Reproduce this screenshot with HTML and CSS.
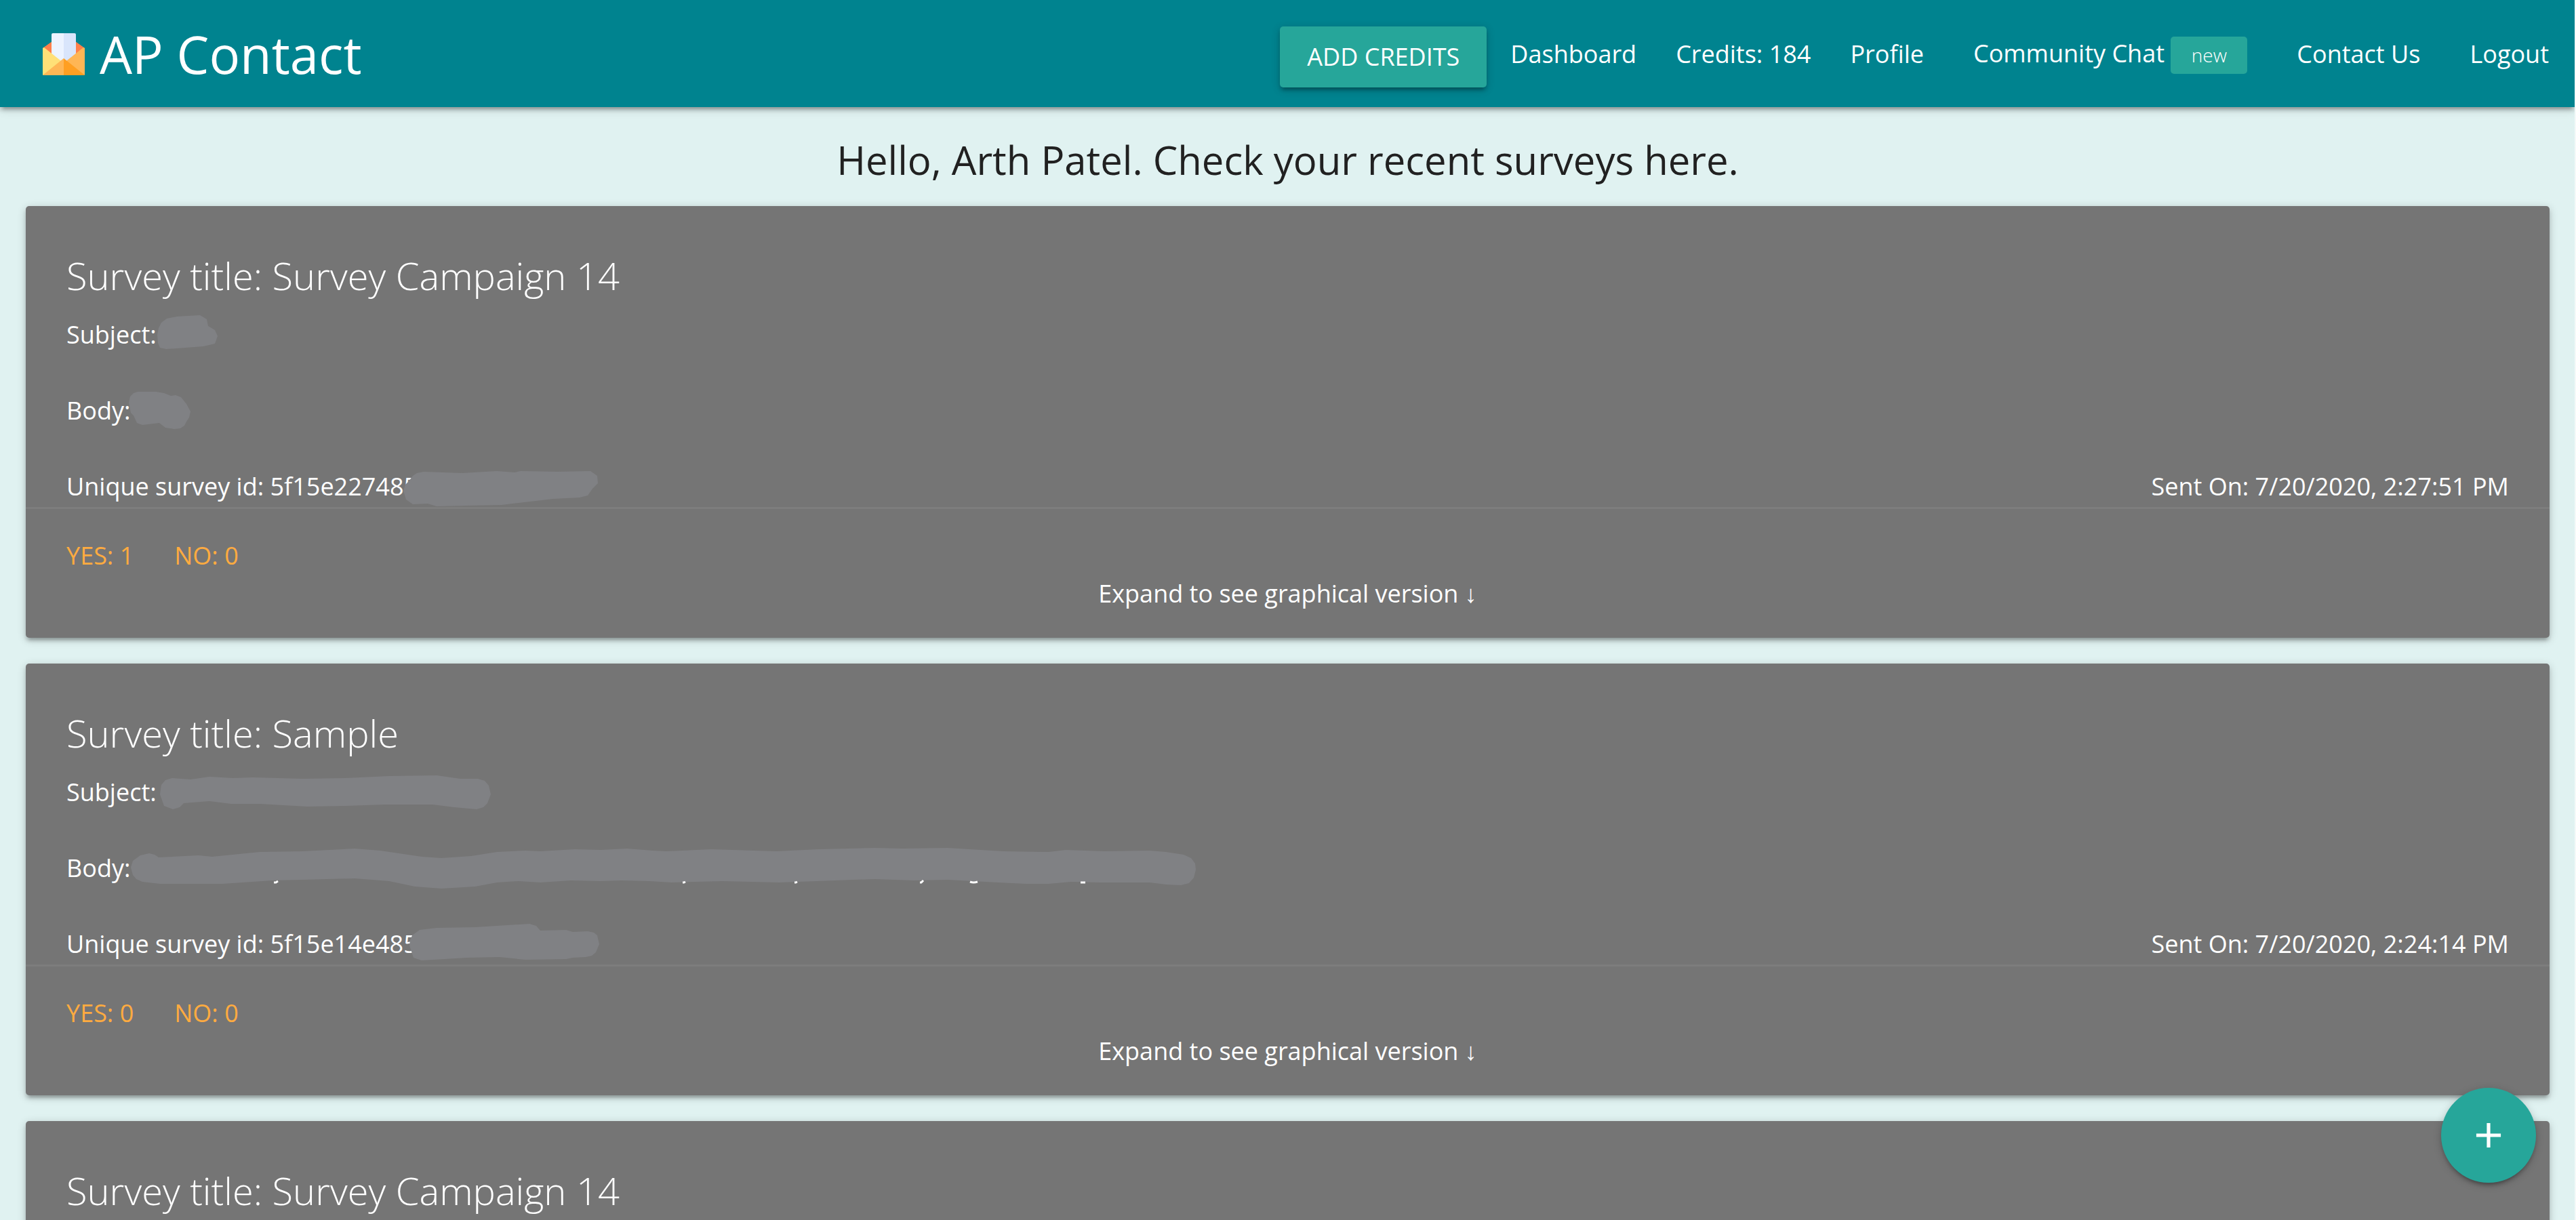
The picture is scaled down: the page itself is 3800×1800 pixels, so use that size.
FILE: index.html
```
<!DOCTYPE html>
<html lang="en">
<head>
<meta charset="utf-8">
<meta name="viewport" content="width=device-width, initial-scale=1">
<title>AP Contact</title>
<link rel="stylesheet" href="styles.css">
</head>
<body>
<header class="navbar">
  <a class="brand" href="#">
    <svg class="brand-icon" viewBox="0 0 62 62" aria-hidden="true">
      <path fill="#ff7f4a" d="M0 22 14 12H48L62 22 31 45Z"/>
      <path fill="#ecf3ff" d="M15 0H31V46L13 34V2Q13 0 15 0Z"/>
      <path fill="#d9e5fb" d="M31 0H47Q49 0 49 2V34L31 46Z"/>
      <path fill="#ffe077" d="M0 22 2 21 31 44 0 62Z"/>
      <path fill="#ffb655" d="M62 22 60 21 31 44 62 62Z"/>
      <path fill="#ecf3ff" d="M19 34H31V41L27 39Z"/>
      <path fill="#d9e5fb" d="M31 34H43L35 39 31 41Z"/>
      <path fill="#ffb655" d="M0 62 31 37V62Z"/>
      <path fill="#ff9f22" d="M31 37 62 62H31Z"/>
    </svg>
    <span>AP Contact</span>
  </a>
  <nav class="menu">
    <button class="btn" type="button">Add Credits</button>
    <a href="#">Dashboard</a>
    <a href="#">Credits: 184</a>
    <a href="#">Profile</a>
    <a class="wide" href="#">Community Chat <span class="badge">new</span></a>
    <a class="wide" href="#">Contact Us</a>
    <a class="wide" href="#">Logout</a>
  </nav>
</header>

<main class="page">
  <h1 class="greeting">Hello, Arth Patel. Check your recent surveys here.</h1>

  <article class="card">
    <div class="card-content">
      <h2>Survey title: Survey Campaign 14</h2>
      <p>Subject:</p>
      <p>Body:</p>
      <p class="meta"><span>Unique survey id: 5f15e227485</span><time>Sent On: 7/20/2020, 2:27:51 PM</time></p>
    </div>
    <div class="card-action">
      <div class="votes"><a href="#">Yes: 1</a><a href="#">No: 0</a></div>
      <button class="expand" type="button">Expand to see graphical version ↓</button>
    </div>
    <svg class="redaction" viewBox="0 0 1760 460" aria-hidden="true">
      <path d="M194 190 196 180 200 172 208 166 223 163 257 161 267 167 269 177 279 183 283 192 279 203 262 207 236 209 207 211 198 209 195 202Z"/>
      <path d="M152 290 154 281 159 276 165 274 192 274 204 276 214 280 221 279 229 282 237 292 243 303 241 312 237 318 234 324 228 328 219 329 206 327 197 320 172 323 164 320 159 309 155 305Z"/>
      <path d="M557 420 560 411 564 407 571 398 577 394 587 392 644 394 695 391 721 393 730 391 785 392 833 391 843 398 844 409 836 417 829 427 817 430 778 432 727 438 702 441 651 442 606 443 593 439 571 440 561 433Z"/>
    </svg>
  </article>

  <article class="card">
    <div class="card-content">
      <h2>Survey title: Sample</h2>
      <p>Subject:</p>
      <p>Body:</p>
      <p class="meta"><span>Unique survey id: 5f15e14e485</span><time>Sent On: 7/20/2020, 2:24:14 PM</time></p>
    </div>
    <div class="card-action">
      <div class="votes"><a href="#">Yes: 0</a><a href="#">No: 0</a></div>
      <button class="expand" type="button">Expand to see graphical version ↓</button>
    </div>
    <svg class="redaction" viewBox="0 0 1760 460" aria-hidden="true">
      <path d="M198 193 200 179 206 172 216 169 243 171 271 167 306 169 335 168 408 170 472 169 536 166 606 165 641 170 667 170 677 173 683 180 686 193 681 206 675 212 665 215 632 212 600 208 530 208 472 210 415 211 345 207 303 207 271 203 233 206 227 212 217 215 204 210Z"/>
      <path d="M155 301 158 291 169 283 182 280 190 282 196 286 255 283 275 285 345 278 408 277 485 273 523 276 584 285 613 287 657 284 695 278 737 276 759 277 810 274 848 275 887 273 925 276 945 277 1011 274 1107 277 1169 274 1252 272 1293 273 1360 272 1442 277 1509 278 1534 275 1592 277 1658 276 1682 278 1708 282 1719 287 1725 295 1726 304 1723 316 1716 324 1704 327 1682 326 1658 323 1583 323 1542 322 1509 325 1476 325 1434 323 1360 319 1310 320 1252 318 1194 320 1111 323 1028 321 953 323 920 321 879 320 848 321 804 320 759 323 727 321 695 323 663 329 613 332 574 329 536 321 485 317 408 319 364 320 290 325 198 325 172 322 163 318 158 312Z"/>
      <path d="M566 416 567 408 570 401 581 393 606 390 663 389 743 384 753 387 759 394 797 393 807 396 829 395 838 397 843 401 846 414 841 426 835 431 826 433 807 434 797 436 737 437 699 433 651 434 584 438 572 434Z"/>
      <path class="remnant" d="M366 323H369L372 321M969 323H971L973 322M1134 323H1136L1138 322M1319 323H1321L1324 320M1393 322Q1398 324 1404 322M1556 323H1563"/>
    </svg>
  </article>

  <article class="card">
    <div class="card-content">
      <h2>Survey title: Survey Campaign 14</h2>
      <p>Subject:</p>
      <p>Body:</p>
      <p class="meta"><span>Unique survey id:</span></p>
    </div>
  </article>
</main>

<button class="fab" type="button" aria-label="New survey">
  <svg viewBox="0 0 24 24" aria-hidden="true"><path fill="#fff" d="M19 13h-6v6h-2v-6H5v-2h6V5h2v6h6v2z"/></svg>
</button>
</body>
</html>
```
FILE: styles.css
```
* { box-sizing: border-box; }

body {
  margin: 0;
  height: 100vh;
  overflow: hidden;
  display: flex;
  flex-direction: column;
  border-right: 2px solid #f4faf9;
  background: #e0f2f1;
  color: #212121;
  font-family: "Open Sans", "Noto Sans", "Liberation Sans", sans-serif;
  font-size: 36px;
  line-height: 56px;
}

a { color: inherit; text-decoration: none; }

button {
  border: 0;
  color: #fff;
  font: inherit;
  cursor: pointer;
}

.navbar,
.card,
.btn,
.fab {
  box-shadow: 0 5px 5px rgba(0, 0, 0, .14), 0 8px 3px -5px rgba(0, 0, 0, .12), 0 3px 13px rgba(0, 0, 0, .2);
}

.navbar {
  position: relative;
  z-index: 1;
  flex: none;
  display: flex;
  align-items: center;
  justify-content: space-between;
  height: 158px;
  padding: 2px 38px 0 63px;
  background: #00838f;
  color: #fff;
}

.brand {
  display: flex;
  align-items: center;
  gap: 22px;
  font-size: 76px;
  line-height: 104px;
}

.brand-icon { width: 62px; height: 62px; }

.menu {
  display: flex;
  align-items: center;
  gap: 58px;
}

.menu .btn {
  width: 305px;
  height: 90px;
  margin: 8px -23px 0 0;
  border-radius: 5px;
  background: #26a69a;
  text-transform: uppercase;
}

.menu .wide { margin-left: 15px; }

.badge {
  display: inline-block;
  width: 113px;
  height: 55px;
  border-radius: 5px;
  background: #26a69a;
  font-size: 28px;
  font-weight: 300;
  line-height: 55px;
  text-align: center;
}

.page {
  flex: 1;
  min-height: 0;
  overflow-y: auto;
  scrollbar-width: none;
  padding: 38px 37px 38px 38px;
}

.greeting {
  margin: 0 0 28px;
  font-size: 58px;
  font-weight: 400;
  line-height: 80px;
  text-align: center;
}

.card {
  position: relative;
  margin-bottom: 38px;
  border-radius: 5px;
  background: #757575;
  color: #fff;
}

.card-content { padding: 62px 60px 2px; }

.card h2 {
  margin: 0 0 20px;
  font-size: 56px;
  font-weight: 300;
  line-height: 80px;
}

.card p { margin: 0 0 56px; }

.card .meta {
  display: flex;
  justify-content: space-between;
  margin: 0;
}

.card-action {
  padding: 41px 60px 37px;
  border-top: 3px solid #7d7d7d;
}

.votes {
  display: flex;
  gap: 60px;
  color: #ffab40;
  text-transform: uppercase;
}

.expand {
  display: block;
  margin: 0 auto;
  padding: 0;
  background: none;
}

/* Scribbles that hide private values */
.redaction {
  position: absolute;
  top: 0;
  left: 0;
  width: 1760px;
  height: 460px;
  pointer-events: none;
  fill: #808184;
}

.redaction .remnant {
  fill: none;
  stroke: #fff;
  stroke-width: 3px;
}

.fab {
  position: fixed;
  right: 59px;
  bottom: 55px;
  z-index: 2;
  display: grid;
  place-items: center;
  width: 140px;
  height: 140px;
  padding: 0;
  border-radius: 50%;
  background: #26a69a;
}

.fab svg { width: 62px; height: 62px; }
```
